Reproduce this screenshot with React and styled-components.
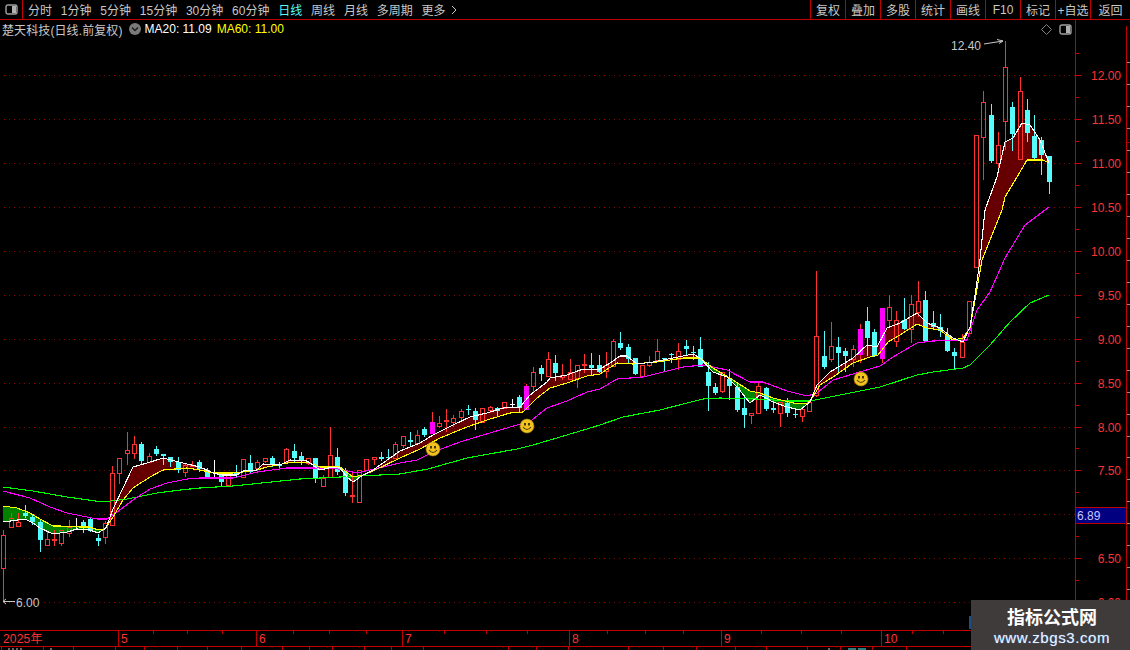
import React from 'react'
import styled, { createGlobalStyle } from 'styled-components'

// candles: [kind, bodyTop, bodyBottom, high, low] in page pixels. r = hollow red, c = cyan, m = magenta, w = white
const candles = [
  ['r', 535, 568, 530, 601], ['r', 518, 527, 513, 528], ['r', 522, 526, 513, 526], ['c', 513, 516, 505, 518],
  ['c', 517, 522, 514, 525], ['c', 522, 540, 520, 552], ['r', 539, 545, 532, 545], ['r', 539, 540, 530, 546],
  ['r', 530, 543, 530, 546], ['r', 527, 533, 520, 537], ['w', 526, 526, 518, 530], ['c', 522, 528, 520, 533],
  ['c', 519, 531, 518, 532], ['c', 538, 541, 534, 546], ['r', 523, 537, 521, 544], ['r', 473, 525, 466, 525],
  ['r', 458, 473, 458, 484], ['r', 450, 453, 432, 465], ['r', 444, 453, 436, 459], ['c', 444, 461, 442, 464],
  ['r', 456, 462, 453, 463], ['c', 449, 454, 446, 456], ['c', 454, 456, 454, 465], ['c', 457, 462, 457, 467],
  ['c', 462, 470, 457, 473], ['r', 465, 472, 463, 477], ['r', 465, 466, 461, 467], ['c', 462, 469, 460, 472],
  ['c', 470, 477, 468, 478], ['w', 472, 472, 460, 477], ['c', 475, 482, 473, 486], ['r', 475, 485, 473, 485],
  ['c', 473, 475, 465, 477], ['r', 459, 477, 459, 478], ['c', 463, 472, 455, 473], ['r', 462, 468, 460, 473],
  ['r', 458, 461, 458, 463], ['c', 458, 465, 456, 467], ['c', 465, 466, 462, 470], ['r', 449, 462, 448, 462],
  ['c', 451, 458, 444, 463], ['c', 456, 461, 452, 465], ['r', 458, 463, 458, 465], ['c', 458, 479, 458, 483],
  ['r', 478, 486, 475, 486], ['r', 455, 477, 427, 477], ['c', 457, 472, 448, 475], ['c', 470, 493, 468, 496],
  ['r', 495, 496, 473, 503], ['r', 470, 502, 470, 503], ['r', 459, 470, 459, 470], ['r', 457, 459, 457, 465],
  ['c', 457, 459, 452, 461], ['c', 457, 458, 449, 459], ['r', 444, 458, 442, 458], ['r', 436, 445, 436, 448],
  ['c', 440, 442, 432, 447], ['r', 435, 443, 430, 444], ['c', 429, 435, 427, 437], ['m', 422, 434, 412, 434],
  ['r', 423, 426, 416, 428], ['r', 420, 421, 409, 432], ['r', 418, 422, 415, 427], ['r', 411, 417, 409, 420],
  ['c', 409, 410, 405, 415], ['c', 411, 420, 408, 430], ['r', 408, 422, 408, 422], ['r', 407, 410, 406, 413],
  ['c', 408, 411, 407, 417], ['r', 402, 408, 402, 408], ['w', 404, 404, 399, 407], ['c', 397, 408, 395, 412],
  ['m', 386, 410, 384, 410], ['r', 372, 386, 367, 392], ['c', 368, 374, 365, 381], ['r', 359, 376, 352, 376],
  ['c', 363, 373, 355, 381], ['r', 375, 377, 364, 380], ['r', 372, 379, 359, 380], ['r', 365, 378, 365, 388],
  ['r', 364, 365, 354, 373], ['c', 365, 368, 353, 375], ['c', 365, 372, 355, 373], ['r', 365, 371, 352, 378],
  ['r', 341, 366, 339, 366], ['c', 343, 348, 332, 350], ['c', 347, 359, 344, 363], ['c', 358, 374, 358, 375],
  ['r', 365, 376, 365, 377], ['r', 362, 365, 356, 367], ['r', 351, 360, 339, 360], ['c', 358, 359, 358, 372],
  ['c', 354, 355, 353, 363], ['r', 351, 359, 343, 370], ['c', 346, 349, 340, 355], ['c', 352, 353, 346, 360],
  ['c', 349, 367, 337, 367], ['c', 372, 386, 362, 411], ['c', 387, 393, 383, 395], ['r', 372, 391, 372, 393],
  ['c', 379, 386, 369, 400], ['c', 387, 410, 383, 412], ['c', 408, 415, 396, 428], ['r', 413, 415, 413, 424],
  ['r', 386, 413, 382, 414], ['c', 388, 409, 387, 411], ['c', 408, 410, 398, 413], ['r', 402, 413, 402, 427],
  ['c', 403, 413, 398, 417], ['c', 414, 415, 408, 418], ['r', 409, 416, 409, 422], ['r', 402, 411, 402, 411],
  ['r', 336, 395, 271, 397], ['c', 356, 367, 331, 369], ['r', 346, 359, 322, 362], ['c', 347, 353, 337, 372],
  ['c', 351, 356, 348, 372], ['r', 349, 359, 345, 367], ['m', 329, 355, 324, 363], ['c', 321, 338, 307, 356],
  ['c', 332, 356, 329, 357], ['m', 308, 359, 308, 363], ['r', 307, 320, 295, 328], ['r', 320, 341, 311, 347],
  ['c', 320, 329, 298, 330], ['r', 304, 329, 295, 343], ['r', 301, 312, 281, 317], ['c', 300, 341, 291, 342],
  ['c', 323, 327, 311, 328], ['c', 327, 331, 314, 337], ['c', 335, 351, 328, 352], ['c', 352, 356, 348, 369],
  ['r', 342, 357, 334, 357], ['r', 301, 333, 301, 334], ['r', 135, 267, 135, 268], ['r', 102, 137, 91, 180],
  ['c', 115, 161, 104, 163], ['r', 145, 163, 132, 173], ['r', 67, 121, 41, 150], ['c', 107, 134, 102, 151],
  ['r', 91, 159, 77, 159], ['c', 110, 133, 99, 142], ['c', 136, 158, 115, 160], ['c', 140, 155, 137, 175],
  ['c', 156, 182, 156, 194],
]

const whiteLine = [
  [3, 522], [25, 519], [33, 523], [40, 528], [53, 534], [67, 532], [77, 529], [90, 530], [98, 533], [106, 528],
  [113, 509], [133, 467], [147, 463], [163, 458], [187, 464], [200, 467], [213, 473], [222, 475], [237, 475],
  [243, 471], [257, 470], [263, 464], [280, 465], [290, 460], [307, 461], [320, 470], [333, 467], [340, 468],
  [347, 477], [353, 482], [363, 475], [373, 470], [400, 451], [420, 443], [433, 435], [453, 425], [470, 417],
  [487, 413], [503, 408], [520, 407], [530, 395], [547, 382], [550, 378], [567, 375], [580, 370], [600, 369],
  [610, 363], [620, 356], [627, 356], [637, 364], [653, 362], [673, 358], [693, 354], [700, 358], [713, 372],
  [727, 377], [737, 387], [750, 403], [760, 395], [773, 402], [787, 407], [800, 410], [810, 402], [817, 385],
  [830, 372], [853, 358], [867, 345], [877, 347], [887, 328], [900, 323], [917, 313], [927, 323], [940, 328],
  [953, 338], [963, 342], [970, 327], [975, 295], [980, 260], [985, 210], [997, 177], [1005, 142], [1013, 138],
  [1022, 123], [1030, 125], [1040, 140], [1049, 163],
]

const yellowLine = [
  [3, 506], [17, 508], [30, 513], [40, 519], [53, 526], [60, 526], [80, 527], [90, 527], [98, 530], [105, 529],
  [113, 517], [123, 500], [133, 488], [150, 477], [163, 470], [187, 468], [200, 470], [213, 473], [233, 473],
  [243, 472], [257, 470], [267, 467], [287, 463], [307, 462], [320, 467], [340, 467], [353, 477], [363, 475],
  [373, 471], [400, 458], [420, 449], [440, 438], [467, 427], [487, 420], [510, 413], [523, 412], [537, 398],
  [550, 388], [567, 383], [587, 376], [600, 374], [617, 363], [633, 364], [657, 362], [683, 358], [700, 358],
  [713, 368], [733, 380], [750, 391], [760, 393], [773, 398], [793, 403], [807, 404], [813, 397], [820, 385],
  [833, 377], [853, 363], [870, 357], [878, 355], [888, 342], [900, 335], [917, 324], [927, 328], [940, 330],
  [953, 340], [963, 338], [970, 328], [975, 300], [982, 260], [1002, 210], [1005, 197], [1017, 177], [1027, 160],
  [1043, 160], [1049, 163],
]

const magentaLine = [
  [3, 491], [30, 498], [50, 507], [67, 513], [97, 519], [107, 519], [117, 512], [133, 500], [150, 489], [167, 483],
  [187, 479], [200, 478], [233, 478], [257, 472], [287, 468], [333, 468], [357, 473], [400, 463], [417, 460],
  [433, 452], [460, 442], [483, 435], [517, 425], [528, 423], [547, 408], [567, 401], [587, 392], [600, 389],
  [617, 379], [643, 377], [663, 372], [683, 367], [703, 365], [727, 370], [750, 382], [763, 382], [787, 391],
  [807, 396], [817, 393], [833, 380], [853, 374], [880, 366], [893, 357], [917, 343], [933, 341], [967, 340],
  [977, 310], [990, 292], [1005, 258], [1025, 225], [1049, 207],
]

const greenLine = [
  [3, 487], [33, 491], [67, 497], [103, 502], [127, 499], [157, 493], [180, 490], [200, 488], [233, 486], [300, 479],
  [400, 474], [428, 469], [467, 458], [517, 449], [533, 445], [567, 435], [600, 425], [623, 417], [660, 410],
  [687, 403], [703, 399], [720, 398], [757, 399], [790, 401], [810, 401], [820, 399], [880, 387], [917, 375],
  [933, 372], [963, 368], [970, 365], [990, 345], [1010, 322], [1030, 303], [1049, 295],
]

const smileys = [[433, 449], [527, 426], [861, 379]]
const prices = ['12.00', '11.50', '11.00', '10.50', '10.00', '9.50', '9.00', '8.50', '8.00', '7.50', '7.00', '6.50', '6.00']
const gridY = (i) => Math.round(75.3 + 43.9 * i) + 0.5

const leftTabs = ['分时', '1分钟', '5分钟', '15分钟', '30分钟', '60分钟', '日线', '周线', '月线', '多周期']
const rightTabs = ['复权', '叠加', '多股', '统计', '画线', 'F10', '标记', '+自选', '返回']
const months = [
  { label: '2025年', width: 118 }, { label: '5', width: 138 }, { label: '6', width: 146 }, { label: '7', width: 167 },
  { label: '8', width: 152 }, { label: '9', width: 160 }, { label: '10', width: 249 },
]
const topTicks = [153, 187, 222, 293, 329, 366, 444, 486, 527, 607, 645, 683, 761, 801, 841, 912, 943]
const bottomTicks = [1, 43, 73, 115, 144, 177, 207, 241, 282, 309, 332, 364, 391, 423, 508, 536, 568, 628, 663, 696, 735, 766, 807, 840, 872, 906]

const RED = '#c00000'
const COLORS = { r: '#ff3232', c: '#54fcfc', m: '#ff00ff', w: '#ffffff' }

const valueAt = (pts, x) => {
  for (let i = 1; i < pts.length; i++) {
    if (x <= pts[i][0]) {
      const [x0, y0] = pts[i - 1]
      const [x1, y1] = pts[i]
      return y0 + ((y1 - y0) * (x - x0)) / (x1 - x0)
    }
  }
  return pts[pts.length - 1][1]
}

const toPath = (pts) => 'M' + pts.map((p) => p.join(' ')).join('L')

const bandPaths = () => {
  let up = ''
  let down = ''
  for (let x = 3; x < 1049; x++) {
    const w = valueAt(whiteLine, x)
    const y = valueAt(yellowLine, x)
    if (Math.abs(w - y) < 0.5) continue
    const seg = `M${x + 0.5} ${w.toFixed(1)}V${y.toFixed(1)}`
    if (w < y) up += seg
    else down += seg
  }
  return { up, down }
}

const GlobalStyle = createGlobalStyle`
  html, body {
    margin: 0;
    padding: 0;
    background: #000;
  }
`

const Page = styled.div`
  position: relative;
  width: 1130px;
  height: 650px;
  overflow: hidden;
  background: #000;
  color: #c8c8c8;
  font-family: "Liberation Sans", "Noto Sans CJK SC", sans-serif;
  font-size: 12px;
`

const Toolbar = styled.div`
  display: flex;
  align-items: center;
  height: 19px;
  border-bottom: 1px solid ${RED};
`

const ToggleCell = styled.div`
  display: flex;
  align-items: center;
  justify-content: center;
  width: 22px;
  height: 100%;
  border-right: 1px solid ${RED};
`

const TabGroup = styled.div`
  display: flex;
  align-items: center;
  gap: 8.8px;
  padding-left: 5px;
`

const Tab = styled.span`
  display: flex;
  align-items: center;
  gap: 5px;
  white-space: nowrap;
  color: ${(p) => (p.$active ? '#54fcfc' : '#c8c8c8')};
`

const RightTabs = styled.div`
  display: flex;
  height: 100%;
  margin-left: auto;
`

const RightTab = styled.div`
  display: flex;
  align-items: center;
  justify-content: center;
  width: ${(p) => (p.$last ? '40px' : '35px')};
  border-left: 1px solid ${RED};
  box-sizing: border-box;
  white-space: nowrap;
`

const Main = styled.div`
  display: flex;
  height: 610px;
`

const PlotColumn = styled.div`
  display: flex;
  flex-direction: column;
  width: 1075px;
`

const Legend = styled.div`
  display: flex;
  align-items: center;
  height: 18px;
  padding: 0 3px 0 2px;
`

const StockName = styled.span`
  margin-right: 5px;
  letter-spacing: 0.1px;
  white-space: nowrap;
`

const MaValue = styled.span`
  margin-left: ${(p) => p.$gap}px;
  color: ${(p) => p.$color};
  white-space: nowrap;
`

const LegendIcons = styled.div`
  display: flex;
  align-items: center;
  gap: 7px;
  margin-left: auto;
`

const Plot = styled.svg`
  display: block;
  width: 1075px;
  height: 592px;
`

const PriceAxis = styled.svg`
  display: block;
  width: 55px;
  height: 610px;
`

const ChartText = styled.text`
  font-family: "Liberation Sans", "Noto Sans CJK SC", sans-serif;
  font-size: 12px;
  fill: ${(p) => p.$color || '#c8c8c8'};
`

const TimeAxis = styled.div`
  position: relative;
  display: flex;
  height: 15px;
  border-top: 1px solid ${RED};
  border-bottom: 1px solid ${RED};
`

const MonthCell = styled.div`
  box-sizing: border-box;
  width: ${(p) => p.$width}px;
  padding-left: ${(p) => (p.$first ? '3px' : '2px')};
  border-left: ${(p) => (p.$first ? 'none' : `1px solid ${RED}`)};
  color: #ff3232;
  font-size: 12px;
  letter-spacing: 0.2px;
  line-height: 16px;
`

const TickLayer = styled.svg`
  position: absolute;
  top: 0;
  left: 0;
  width: 1130px;
  height: 4px;
`

const BottomStrip = styled.svg`
  display: block;
  width: 1130px;
  height: 3px;
`

const Watermark = styled.div`
  position: absolute;
  right: 0;
  bottom: 0;
  display: flex;
  flex-direction: column;
  align-items: center;
  box-sizing: border-box;
  width: 159px;
  height: 50px;
  padding-left: 3px;
  background: #3f3b3a;
  color: #fff;
`

const WatermarkTitle = styled.div`
  margin-top: 5px;
  font-size: 18px;
  font-weight: 700;
  line-height: 22px;
  font-family: "Noto Sans CJK SC", sans-serif;
`

const WatermarkUrl = styled.div`
  margin-top: 1px;
  font-size: 15px;
  line-height: 20px;
  letter-spacing: 0.6px;
  color: #e6f1ff;
  text-shadow: 0 0 1px #5a9cf0;
`

const ToggleIcon = () => (
  <svg width="13" height="11" viewBox="0 0 13 11">
    <rect x="1" y="1" width="11" height="9" rx="2" fill="none" stroke="#a0a0a0" strokeWidth="1.4" />
    <rect x="7" y="2" width="4" height="7" fill="#b0b0b0" />
  </svg>
)

const Candle = ({ data, index }) => {
  const [kind, top, bottom, high, low] = data
  const c = Math.round(3.3 + 7.26 * index)
  const color = COLORS[kind]
  const wickColor = kind === 'm' ? COLORS.r : color
  const wx = c + 0.5
  return (
    <g shapeRendering="crispEdges">
      {high < top && <path d={`M${wx} ${high}V${top}`} stroke={wickColor} />}
      {low > bottom && <path d={`M${wx} ${bottom}V${low}`} stroke={wickColor} />}
      {kind === 'r' && <rect x={c - 1.5} y={top + 0.5} width={4} height={Math.max(bottom - top, 1)} fill="none" stroke={color} />}
      {(kind === 'c' || kind === 'm') && <rect x={c - 2} y={top} width={5} height={Math.max(bottom - top, 1)} fill={color} />}
      {kind === 'w' && <rect x={c - 2} y={top} width={5} height={1} fill={color} />}
    </g>
  )
}

const Smiley = ({ x, y }) => (
  <g>
    <circle cx={x} cy={y} r="7" fill="#f2c31f" />
    <circle cx={x} cy={y} r="7" fill="none" stroke="#a88414" strokeWidth="0.6" />
    <rect x={x - 3} y={y - 3} width="2" height="2.5" fill="#4a3600" />
    <rect x={x + 1} y={y - 3} width="2" height="2.5" fill="#4a3600" />
    <path d={`M${x - 4} ${y + 1}Q${x} ${y + 6} ${x + 4} ${y + 1}`} fill="none" stroke="#4a3600" strokeWidth="1.1" />
  </g>
)

const App = () => {
  const { up, down } = bandPaths()
  return (
    <Page>
      <GlobalStyle />
      <Toolbar>
        <ToggleCell>
          <ToggleIcon />
        </ToggleCell>
        <TabGroup>
          {leftTabs.map((t) => (
            <Tab key={t} $active={t === '日线'}>{t}</Tab>
          ))}
          <Tab>
            更多
            <svg width="6" height="10" viewBox="0 0 6 10">
              <path d="M1 1L5 5L1 9" fill="none" stroke="#c8c8c8" />
            </svg>
          </Tab>
        </TabGroup>
        <RightTabs>
          {rightTabs.map((t, i) => (
            <RightTab key={t} $last={i === rightTabs.length - 1}>{t}</RightTab>
          ))}
        </RightTabs>
      </Toolbar>

      <Main>
        <PlotColumn>
          <Legend>
            <StockName>楚天科技(日线.前复权)</StockName>
            <svg width="14" height="14" viewBox="0 0 14 14">
              <circle cx="7" cy="7" r="6" fill="#7a7a7a" />
              <path d="M4 5.5L7 8.5L10 5.5" fill="none" stroke="#1c1c1c" strokeWidth="1.4" />
            </svg>
            <MaValue $gap={3} $color="#ffffff">MA20: 11.09</MaValue>
            <MaValue $gap={5} $color="#ffff00">MA60: 11.00</MaValue>
            <LegendIcons>
              <svg width="11" height="11" viewBox="0 0 11 11">
                <path d="M5.5 0.5L10.5 5.5L5.5 10.5L0.5 5.5Z" fill="none" stroke="#808080" />
              </svg>
              <ToggleIcon />
            </LegendIcons>
          </Legend>
          <Plot viewBox="0 38 1075 592">
            {prices.map((p, i) => (
              <path key={p} d={`M4 ${gridY(i)}H1075`} stroke="#900000" strokeDasharray="1 4" shapeRendering="crispEdges" />
            ))}
            <path d={up} stroke="#660000" shapeRendering="crispEdges" />
            <path d={down} stroke="#008000" shapeRendering="crispEdges" />
            {candles.map((c, i) => (
              <Candle key={i} data={c} index={i} />
            ))}
            <g fill="none" shapeRendering="crispEdges" strokeWidth="1.1">
              <path d={toPath(greenLine)} stroke="#00ff00" />
              <path d={toPath(magentaLine)} stroke="#ff00ff" />
              <path d={toPath(yellowLine)} stroke="#ffff00" />
              <path d={toPath(whiteLine)} stroke="#ffffff" />
            </g>
            {smileys.map(([x, y]) => (
              <Smiley key={x} x={x} y={y} />
            ))}
            <ChartText x="951" y="50">12.40</ChartText>
            <path d="M984 44L1003 41M1003 41L997 39.5M1003 41L999 43.5" fill="none" stroke="#c8c8c8" />
            <ChartText x="16" y="607">6.00</ChartText>
            <path d="M3 601.5H15M3 601.5L6 599M3 601.5L6 604" fill="none" stroke="#c8c8c8" />
            <rect x="969" y="616" width="2" height="13" fill="#1c4f86" />
          </Plot>
        </PlotColumn>

        <PriceAxis viewBox="1075 20 55 610">
          <path d="M1075.5 20V630M1126.5 26V630M1126 142.5H1130" stroke={RED} shapeRendering="crispEdges" />
          {prices.map((p, i) => (
            <g key={p} shapeRendering="crispEdges">
              <path d={`M1075 ${gridY(i)}H1082`} stroke={RED} />
              <path d={`M1075 ${gridY(i) - 22}H1079`} stroke={RED} />
              <path d={`M1127 ${gridY(i) + 9}H1130M1127 ${gridY(i) - 13}H1130`} stroke="#8a8a8a" />
              {p !== '7.00' && (
                <ChartText x="1121" y={gridY(i) + 4.5} $color="#ff3232" textAnchor="end">{p}</ChartText>
              )}
            </g>
          ))}
          <rect x="1075.5" y="507.5" width="51" height="16" fill="#000080" stroke={RED} shapeRendering="crispEdges" />
          <ChartText x="1077" y="520" $color="#c8c8ff">6.89</ChartText>
        </PriceAxis>
      </Main>

      <TimeAxis>
        {months.map((m, i) => (
          <MonthCell key={m.label} $width={m.width} $first={i === 0}>{m.label}</MonthCell>
        ))}
        <TickLayer viewBox="0 0 1130 4">
          {topTicks.map((x) => (
            <path key={x} d={`M${x + 0.5} 0V3`} stroke={RED} shapeRendering="crispEdges" />
          ))}
        </TickLayer>
      </TimeAxis>
      <BottomStrip viewBox="0 0 1130 3">
        {bottomTicks.map((x) => (
          <path key={x} d={`M${x + 0.5} 0V3`} stroke={RED} shapeRendering="crispEdges" />
        ))}
        <path d="M8 2H22M50 2H52M828 2H830" stroke="#c8c8c8" strokeDasharray="2 2" />
        <path d="M848 2H866" stroke="#54fcfc" strokeDasharray="8 2" />
      </BottomStrip>

      <Watermark>
        <WatermarkTitle>指标公式网</WatermarkTitle>
        <WatermarkUrl>www.zbgs3.com</WatermarkUrl>
      </Watermark>
    </Page>
  )
}

export default App
